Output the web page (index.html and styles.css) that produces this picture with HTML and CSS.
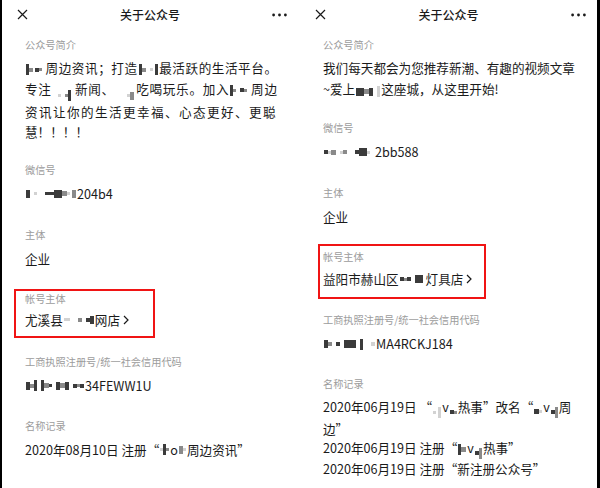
FILE: index.html
```html
<!DOCTYPE html>
<html lang="zh-CN">
<head>
<meta charset="utf-8">
<title>关于公众号</title>
<link rel="stylesheet" href="styles.css">
</head>
<body>
<div class="frame">
  <div class="screen screen-a">
    <header class="bar">
      <svg class="ic-close" width="11" height="11" viewBox="0 0 11 11"><path d="M1 1L10 10M10 1L1 10" stroke="#1a1a1a" stroke-width="1.2" fill="none"/></svg>
      <div class="title">关于公众号</div>
      <svg class="ic-more" width="15" height="4" viewBox="0 0 15 4"><circle cx="1.6" cy="2" r="1.4" fill="#1a1a1a"/><circle cx="7.5" cy="2" r="1.4" fill="#1a1a1a"/><circle cx="13.4" cy="2" r="1.4" fill="#1a1a1a"/></svg>
    </header>
    <main class="info">
      <section class="sec s-intro">
        <div class="lbl">公众号简介</div>
        <div class="intro">
          <div class="ln jl"><span class="mz"><i class="c7 k"></i><i class="c4 g"></i><i class="s2"></i><i class="c4 k"></i><i class="c3 g"></i><i class="s2"></i></span>周边资讯；打造<span class="mz"><i class="c7 k"></i><i class="c4 g"></i><i class="s4"></i><i class="c3 p"></i><i class="s2"></i><i class="c7 k"></i></span>最活跃的生活平台。</div>
          <div class="ln jl">专注 <span class="mz"><i class="s2"></i><i class="c3 p"></i><i class="s4"></i><i class="c3 g"></i><i class="c7 k"></i><i class="s2"></i></span>新闻、 <span class="mz"><i class="s8"></i><i class="c3 p"></i><i class="c6 g"></i></span>吃喝玩乐。加入<span class="mz"><i class="c7 k"></i><i class="c3 g"></i><i class="s4"></i><i class="c4 k"></i><i class="c3 g"></i><i class="s2"></i></span>周边</div>
          <div class="ln wide">资讯让你的生活更幸福、心态更好、更聪</div>
          <div class="ln">慧！！！！</div>
        </div>
      </section>
      <section class="sec s-wx">
        <div class="lbl">微信号</div>
        <div class="val"><span class="mz"><i class="c6 k"></i><i class="s4"></i><i class="c3 p"></i><i class="s8"></i><i class="c8 k"></i><i class="c9 k"></i><i class="c5 g"></i><i class="c3 p"></i><i class="s2"></i><i class="c6 g"></i></span>204b4</div>
      </section>
      <section class="sec s-zt">
        <div class="lbl">主体</div>
        <div class="val">企业</div>
      </section>
      <section class="owner">
        <div class="lbl">帐号主体</div>
        <div class="val">尤溪县<span class="mz"><i class="c3 p"></i><i class="c3 p"></i><i class="s8"></i><i class="c4 g"></i><i class="s4"></i><i class="c4 k"></i><i class="c6 k"></i></span>网店<svg class="chev" width="6" height="10" viewBox="0 0 6 10"><path d="M1 1L5 5L1 9" stroke="#1a1a1a" stroke-width="1.2" fill="none"/></svg></div>
      </section>
      <section class="sec s-lic">
        <div class="lbl">工商执照注册号/统一社会信用代码</div>
        <div class="val"><span class="mz"><i class="c6 k"></i><i class="c4 g"></i><i class="c7 k"></i><i class="s4"></i><i class="c7 k"></i><i class="c5 g"></i><i class="c3 k"></i><i class="s4"></i><i class="c6 k"></i><i class="c5 g"></i><i class="c6 k"></i><i class="s4"></i><i class="c4 k"></i><i class="c3 g"></i><i class="c4 k"></i></span>34FEWW1U</div>
      </section>
      <section class="sec s-name">
        <div class="lbl">名称记录</div>
        <div class="val">2020年08月10日 注册“<span class="mz"><i class="c3 p"></i><i class="c7 k"></i><i class="c3 g"></i></span>o<span class="mz"><i class="c6 g"></i><i class="c3 p"></i></span>周边资讯”</div>
      </section>
    </main>
  </div>

  <div class="screen screen-b">
    <header class="bar">
      <svg class="ic-close" width="11" height="11" viewBox="0 0 11 11"><path d="M1 1L10 10M10 1L1 10" stroke="#1a1a1a" stroke-width="1.2" fill="none"/></svg>
      <div class="title">关于公众号</div>
      <svg class="ic-more" width="15" height="4" viewBox="0 0 15 4"><circle cx="1.6" cy="2" r="1.4" fill="#1a1a1a"/><circle cx="7.5" cy="2" r="1.4" fill="#1a1a1a"/><circle cx="13.4" cy="2" r="1.4" fill="#1a1a1a"/></svg>
    </header>
    <main class="info">
      <section class="sec s-intro">
        <div class="lbl">公众号简介</div>
        <div class="intro">
          <div class="ln">我们每天都会为您推荐新潮、有趣的视频文章</div>
          <div class="ln">~爱上<span class="mz"><i class="c9 k"></i><i class="c5 g"></i><i class="c6 k"></i><i class="s4"></i><i class="c7 p"></i></span>这座城，从这里开始!</div>
        </div>
      </section>
      <section class="sec s-wx">
        <div class="lbl">微信号</div>
        <div class="val"><span class="mz"><i class="c4 k"></i><i class="c3 p"></i><i class="c5 g"></i><i class="s4"></i><i class="c3 p"></i><i class="c4 g"></i><i class="s8"></i><i class="c4 k"></i><i class="c9 k"></i><i class="c3 p"></i><i class="s4"></i></span>2bb588</div>
      </section>
      <section class="sec s-zt">
        <div class="lbl">主体</div>
        <div class="val">企业</div>
      </section>
      <section class="owner">
        <div class="lbl">帐号主体</div>
        <div class="val">益阳市赫山区<span class="mz"><i class="c4 k"></i><i class="c3 g"></i><i class="c4 k"></i><i class="s4"></i><i class="c9 k"></i><i class="s2"></i></span>灯具店<svg class="chev" width="6" height="10" viewBox="0 0 6 10"><path d="M1 1L5 5L1 9" stroke="#1a1a1a" stroke-width="1.2" fill="none"/></svg></div>
      </section>
      <section class="sec s-lic">
        <div class="lbl">工商执照注册号/统一社会信用代码</div>
        <div class="val"><span class="mz"><i class="c6 k"></i><i class="c4 g"></i><i class="s4"></i><i class="c4 k"></i><i class="s4"></i><i class="c9 k"></i><i class="c6 k"></i><i class="s4"></i><i class="c7 k"></i><i class="s8"></i><i class="c4 p"></i></span>MA4RCKJ184</div>
      </section>
      <section class="sec s-name">
        <div class="lbl">名称记录</div>
        <div class="rec">
          <div class="ln">2020年06月19日 “<span class="mz"><i class="c3 p"></i><i class="s2"></i><i class="c7 p"></i></span>v<span class="mz"><i class="c4 k"></i><i class="c3 g"></i></span>热事”改名“<span class="mz"><i class="c5 k"></i><i class="c3 p"></i></span>v<span class="mz"><i class="c4 k"></i><i class="c7 g"></i></span>周</div>
          <div class="ln">边”</div>
          <div class="ln">2020年06月19日 注册“<span class="mz"><i class="c7 k"></i><i class="c5 g"></i></span>v<span class="mz"><i class="c4 k"></i><i class="c7 g"></i></span>热事”</div>
          <div class="ln">2020年06月19日 注册“新注册公众号”</div>
        </div>
      </section>
    </main>
  </div>
</div>
</body>
</html>
```
FILE: styles.css
```css
* { box-sizing: border-box; margin: 0; padding: 0; }

body {
  width: 600px;
  height: 488px;
  overflow: hidden;
  background: #fff;
  font-family: "Noto Sans CJK SC", "Noto Sans", sans-serif;
  color: #1a1a1a;
}

.frame {
  display: flex;
  gap: 2px;
  height: 488px;
}

.screen {
  height: 100%;
  background: #fff;
  overflow: hidden;
}
.screen-a { width: 298px; border-left: 2px solid #000; }
.screen-b { width: 300px; border-right: 3px solid #000; }

/* header */
.bar {
  height: 29px;
  display: grid;
  grid-template-columns: 1fr auto 1fr;
  align-items: center;
  padding: 0 11px;
}
.ic-close { margin-left: 4px; display: block; }
.title {
  font-size: 12px;
  font-weight: 500;
  line-height: 16px;
  color: #1a1a1a;
}
.ic-more { justify-self: end; display: block; }

/* content */
.info { padding: 8px 21px 0 23px; }

.sec { margin-top: 22px; }
.s-intro { margin-top: 0; }

.lbl {
  font-size: 10.2px;
  line-height: 16px;
  color: #9c9c9c;
  white-space: nowrap;
}

.val {
  margin-top: 6px;
  font-size: 12.6px;
  line-height: 20px;
  white-space: nowrap;
  display: flex;
  align-items: center;
}

.intro {
  margin-top: 5px;
  font-size: 12.6px;
  line-height: 20.5px;
}
.ln { white-space: nowrap; }
.jl { text-align: justify; text-align-last: justify; }
.wide { letter-spacing: 1.4px; }

.rec {
  margin-top: 5px;
  font-size: 12.6px;
  line-height: 19.7px;
}

.chev { margin-left: 3px; display: block; }

/* boxed owner section */
.owner { border: 2px solid #f01414; }
.owner .val { margin-top: 3px; }
.screen-a .owner { width: 141px; margin: 20px 0 0 -11px; padding: 0 0 6px 9px; }
.screen-b .owner { width: 168px; margin: 17px 0 0 -5px; padding: 3px 0 8px 3px; }
.screen-b .owner .val { margin-top: 4px; }

/* per-screen spacing */
.screen-a .s-wx { margin-top: 19px; }
.screen-b .s-wx { margin-top: 21px; }
.s-zt { margin-top: 23px; }
.screen-a .s-lic { margin-top: 16px; }
.screen-b .s-lic { margin-top: 13px; }

/* mosaic (pixelated redactions) */
.mz {
  display: inline-flex;
  align-items: center;
  height: 12px;
  vertical-align: -2px;
  margin: 0 1px;
}
.mz i { display: block; }
.c3 { width: 3px; height: 3px; }
.c4 { width: 4px; height: 4px; }
.c5 { width: 5px; height: 5px; }
.c6 { width: 4px; height: 8px; }
.c7 { width: 3px; height: 11px; }
.c8 { width: 9px; height: 3px; }
.c9 { width: 8px; height: 8px; }
.k { background: #3b3b3b; }
.g { background: #8a8a8a; }
.p { background: #d2d2d2; }
.s2 { width: 2px; }
.s4 { width: 4px; }
.s8 { width: 8px; }
```
